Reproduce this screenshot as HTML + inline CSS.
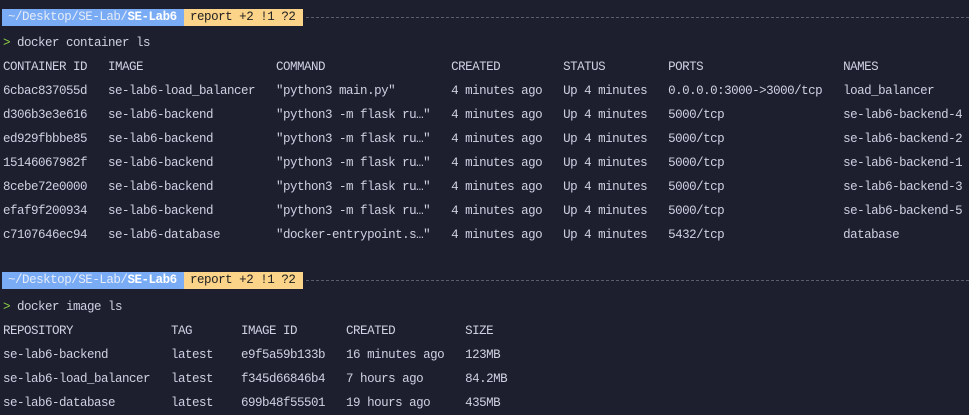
<!DOCTYPE html>
<html><head><meta charset="utf-8"><style>
html,body{margin:0;padding:0;background:#1e1f2e;width:969px;height:412px;overflow:hidden}
pre{margin:0;position:absolute;left:3px;top:7px;font-family:"Liberation Mono",monospace;font-size:12.5px;letter-spacing:-0.5px;line-height:24px;color:#cdd1e2;white-space:pre}
.bar{position:absolute;height:17px;left:2px;font-family:"Liberation Mono",monospace;font-size:12.5px;letter-spacing:-0.475px;line-height:17px;display:flex;width:967px}
.b{background:#7aacf5;color:#e6ecf8;padding:0 6px 0 6px;width:170px}
.b b{color:#fff}
.y{background:#fbd389;color:#222;padding:0 6px;width:107px}
.d{flex:1;border-top:1px dashed #5a5d6e;margin-top:8px;height:0;margin-left:3px}
.g{color:#8ccf45}
</style></head><body>
<div class="bar" style="top:9px"><div class="b">~/Desktop/SE-Lab/<b>SE-Lab6</b></div><div class="y">report +2 !1 ?2</div><div class="d"></div></div>
<div class="bar" style="top:272px"><div class="b">~/Desktop/SE-Lab/<b>SE-Lab6</b></div><div class="y">report +2 !1 ?2</div><div class="d"></div></div>
<pre>

<span class="g">&gt;</span> docker container ls
CONTAINER ID   IMAGE                   COMMAND                  CREATED         STATUS         PORTS                    NAMES
6cbac837055d   se-lab6-load_balancer   "python3 main.py"        4 minutes ago   Up 4 minutes   0.0.0.0:3000-&gt;3000/tcp   load_balancer
d306b3e3e616   se-lab6-backend         "python3 -m flask ru…"   4 minutes ago   Up 4 minutes   5000/tcp                 se-lab6-backend-4
ed929fbbbe85   se-lab6-backend         "python3 -m flask ru…"   4 minutes ago   Up 4 minutes   5000/tcp                 se-lab6-backend-2
15146067982f   se-lab6-backend         "python3 -m flask ru…"   4 minutes ago   Up 4 minutes   5000/tcp                 se-lab6-backend-1
8cebe72e0000   se-lab6-backend         "python3 -m flask ru…"   4 minutes ago   Up 4 minutes   5000/tcp                 se-lab6-backend-3
efaf9f200934   se-lab6-backend         "python3 -m flask ru…"   4 minutes ago   Up 4 minutes   5000/tcp                 se-lab6-backend-5
c7107646ec94   se-lab6-database        "docker-entrypoint.s…"   4 minutes ago   Up 4 minutes   5432/tcp                 database


<span class="g">&gt;</span> docker image ls
REPOSITORY              TAG       IMAGE ID       CREATED          SIZE
se-lab6-backend         latest    e9f5a59b133b   16 minutes ago   123MB
se-lab6-load_balancer   latest    f345d66846b4   7 hours ago      84.2MB
se-lab6-database        latest    699b48f55501   19 hours ago     435MB
</pre>
</body></html>
